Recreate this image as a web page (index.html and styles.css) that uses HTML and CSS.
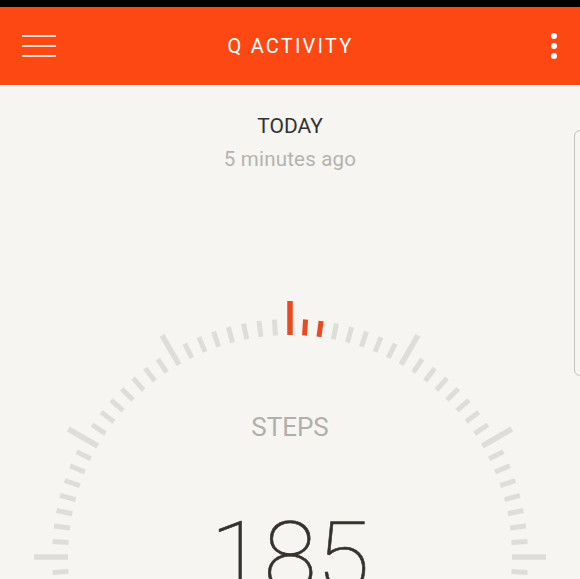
FILE: index.html
```html
<!DOCTYPE html>
<html lang="en">
<head>
    <meta charset="UTF-8">
    <meta name="viewport" content="width=device-width, initial-scale=1.0">
    <title>Q Activity</title>
    <link rel="stylesheet" href="styles.css">
    <script>
        document.addEventListener('DOMContentLoaded', () => {
            const svg = document.getElementById('gaugeTicks');
            const cx = 290;
            const cy = 266;
            const inner = 222;
            const progress = 3; // ticks lit in orange, counted from the top

            for (let i = 0; i < 96; i++) {
                const major = i % 8 === 0;
                const outer = major ? 256 : 238;
                const a = i * 3.75 * Math.PI / 180;
                const sx = Math.sin(a);
                const sy = -Math.cos(a);
                const line = document.createElementNS('http://www.w3.org/2000/svg', 'line');
                line.setAttribute('x1', (cx + sx * inner).toFixed(2));
                line.setAttribute('y1', (cy + sy * inner).toFixed(2));
                line.setAttribute('x2', (cx + sx * outer).toFixed(2));
                line.setAttribute('y2', (cy + sy * outer).toFixed(2));
                line.setAttribute('class', i < progress ? 'tick tick-on' : 'tick');
                if (major) line.classList.add('tick-major');
                svg.appendChild(line);
            }
        });
    </script>
</head>
<body>
    <div class="status-bar"></div>
    <div class="app-bar">
        <div class="menu-icon">
            <span></span>
            <span></span>
            <span></span>
        </div>
        <div class="app-title">Q ACTIVITY</div>
        <div class="more-icon">
            <span></span>
            <span></span>
            <span></span>
        </div>
    </div>
    <div class="summary">
        <div class="day">TODAY</div>
        <div class="updated">5 minutes ago</div>
    </div>
    <div class="gauge">
        <svg id="gaugeTicks" class="gauge-ticks" width="580" height="289" viewBox="0 0 580 289"></svg>
        <div class="gauge-label">STEPS</div>
        <div class="gauge-value">185</div>
    </div>
    <div class="edge-handle"></div>
</body>
</html>
```

FILE: styles.css
```css
body, html {
    margin: 0;
    padding: 0;
    width: 100%;
    height: 100%;
    overflow: hidden;
    background-color: #f6f5f2;
    font-family: Roboto, 'Noto Sans', sans-serif;
}

.status-bar {
    height: 7px;
    background-color: #000;
}

.app-bar {
    height: 78px;
    display: grid;
    grid-template-columns: 1fr auto 1fr;
    align-items: center;
    padding: 0 23px 0 22px;
    background-color: #fd4813;
    color: #fff;
}

.menu-icon {
    width: 34px;
    display: flex;
    flex-direction: column;
    gap: 8px;
    margin-top: -1px;
}

.menu-icon span {
    display: block;
    height: 2px;
    background-color: #fddccd;
}

.app-title {
    font-size: 20px;
    letter-spacing: 2.2px;
    margin-left: 2px;
}

.more-icon {
    justify-self: end;
    display: flex;
    flex-direction: column;
    gap: 4px;
    margin-top: -1px;
}

.more-icon span {
    width: 6px;
    height: 6px;
    border-radius: 50%;
    background-color: #fff;
}

.summary {
    display: flex;
    flex-direction: column;
    align-items: center;
    padding-top: 29px;
}

.day {
    font-size: 21px;
    line-height: 24px;
    color: #333230;
}

.updated {
    font-size: 20.5px;
    line-height: 24px;
    margin-top: 9px;
    color: #b5b3b0;
    letter-spacing: 0.2px;
}

.gauge {
    position: relative;
    height: 289px;
    overflow: hidden;
    margin-top: 120px;
    display: flex;
    flex-direction: column;
    align-items: center;
}

.gauge-ticks {
    position: absolute;
    top: 0;
    left: 0;
}

.tick {
    stroke: #dfddd9;
    stroke-width: 5;
}

.tick-major {
    stroke-width: 5.5;
}

.tick-on {
    stroke: #e94b1f;
}

.gauge-label {
    margin-top: 121px;
    font-size: 26px;
    line-height: 30px;
    color: #b1afac;
}

.gauge-value {
    margin-top: 60px;
    font-size: 97px;
    line-height: 110px;
    font-weight: 100;
    color: #36322e;
    -webkit-text-stroke: 0.6px #36322e;
}

.edge-handle {
    position: absolute;
    top: 130px;
    right: -6px;
    width: 10px;
    height: 244px;
    border: 1px solid #c4c2bf;
    border-radius: 6px;
}
```
